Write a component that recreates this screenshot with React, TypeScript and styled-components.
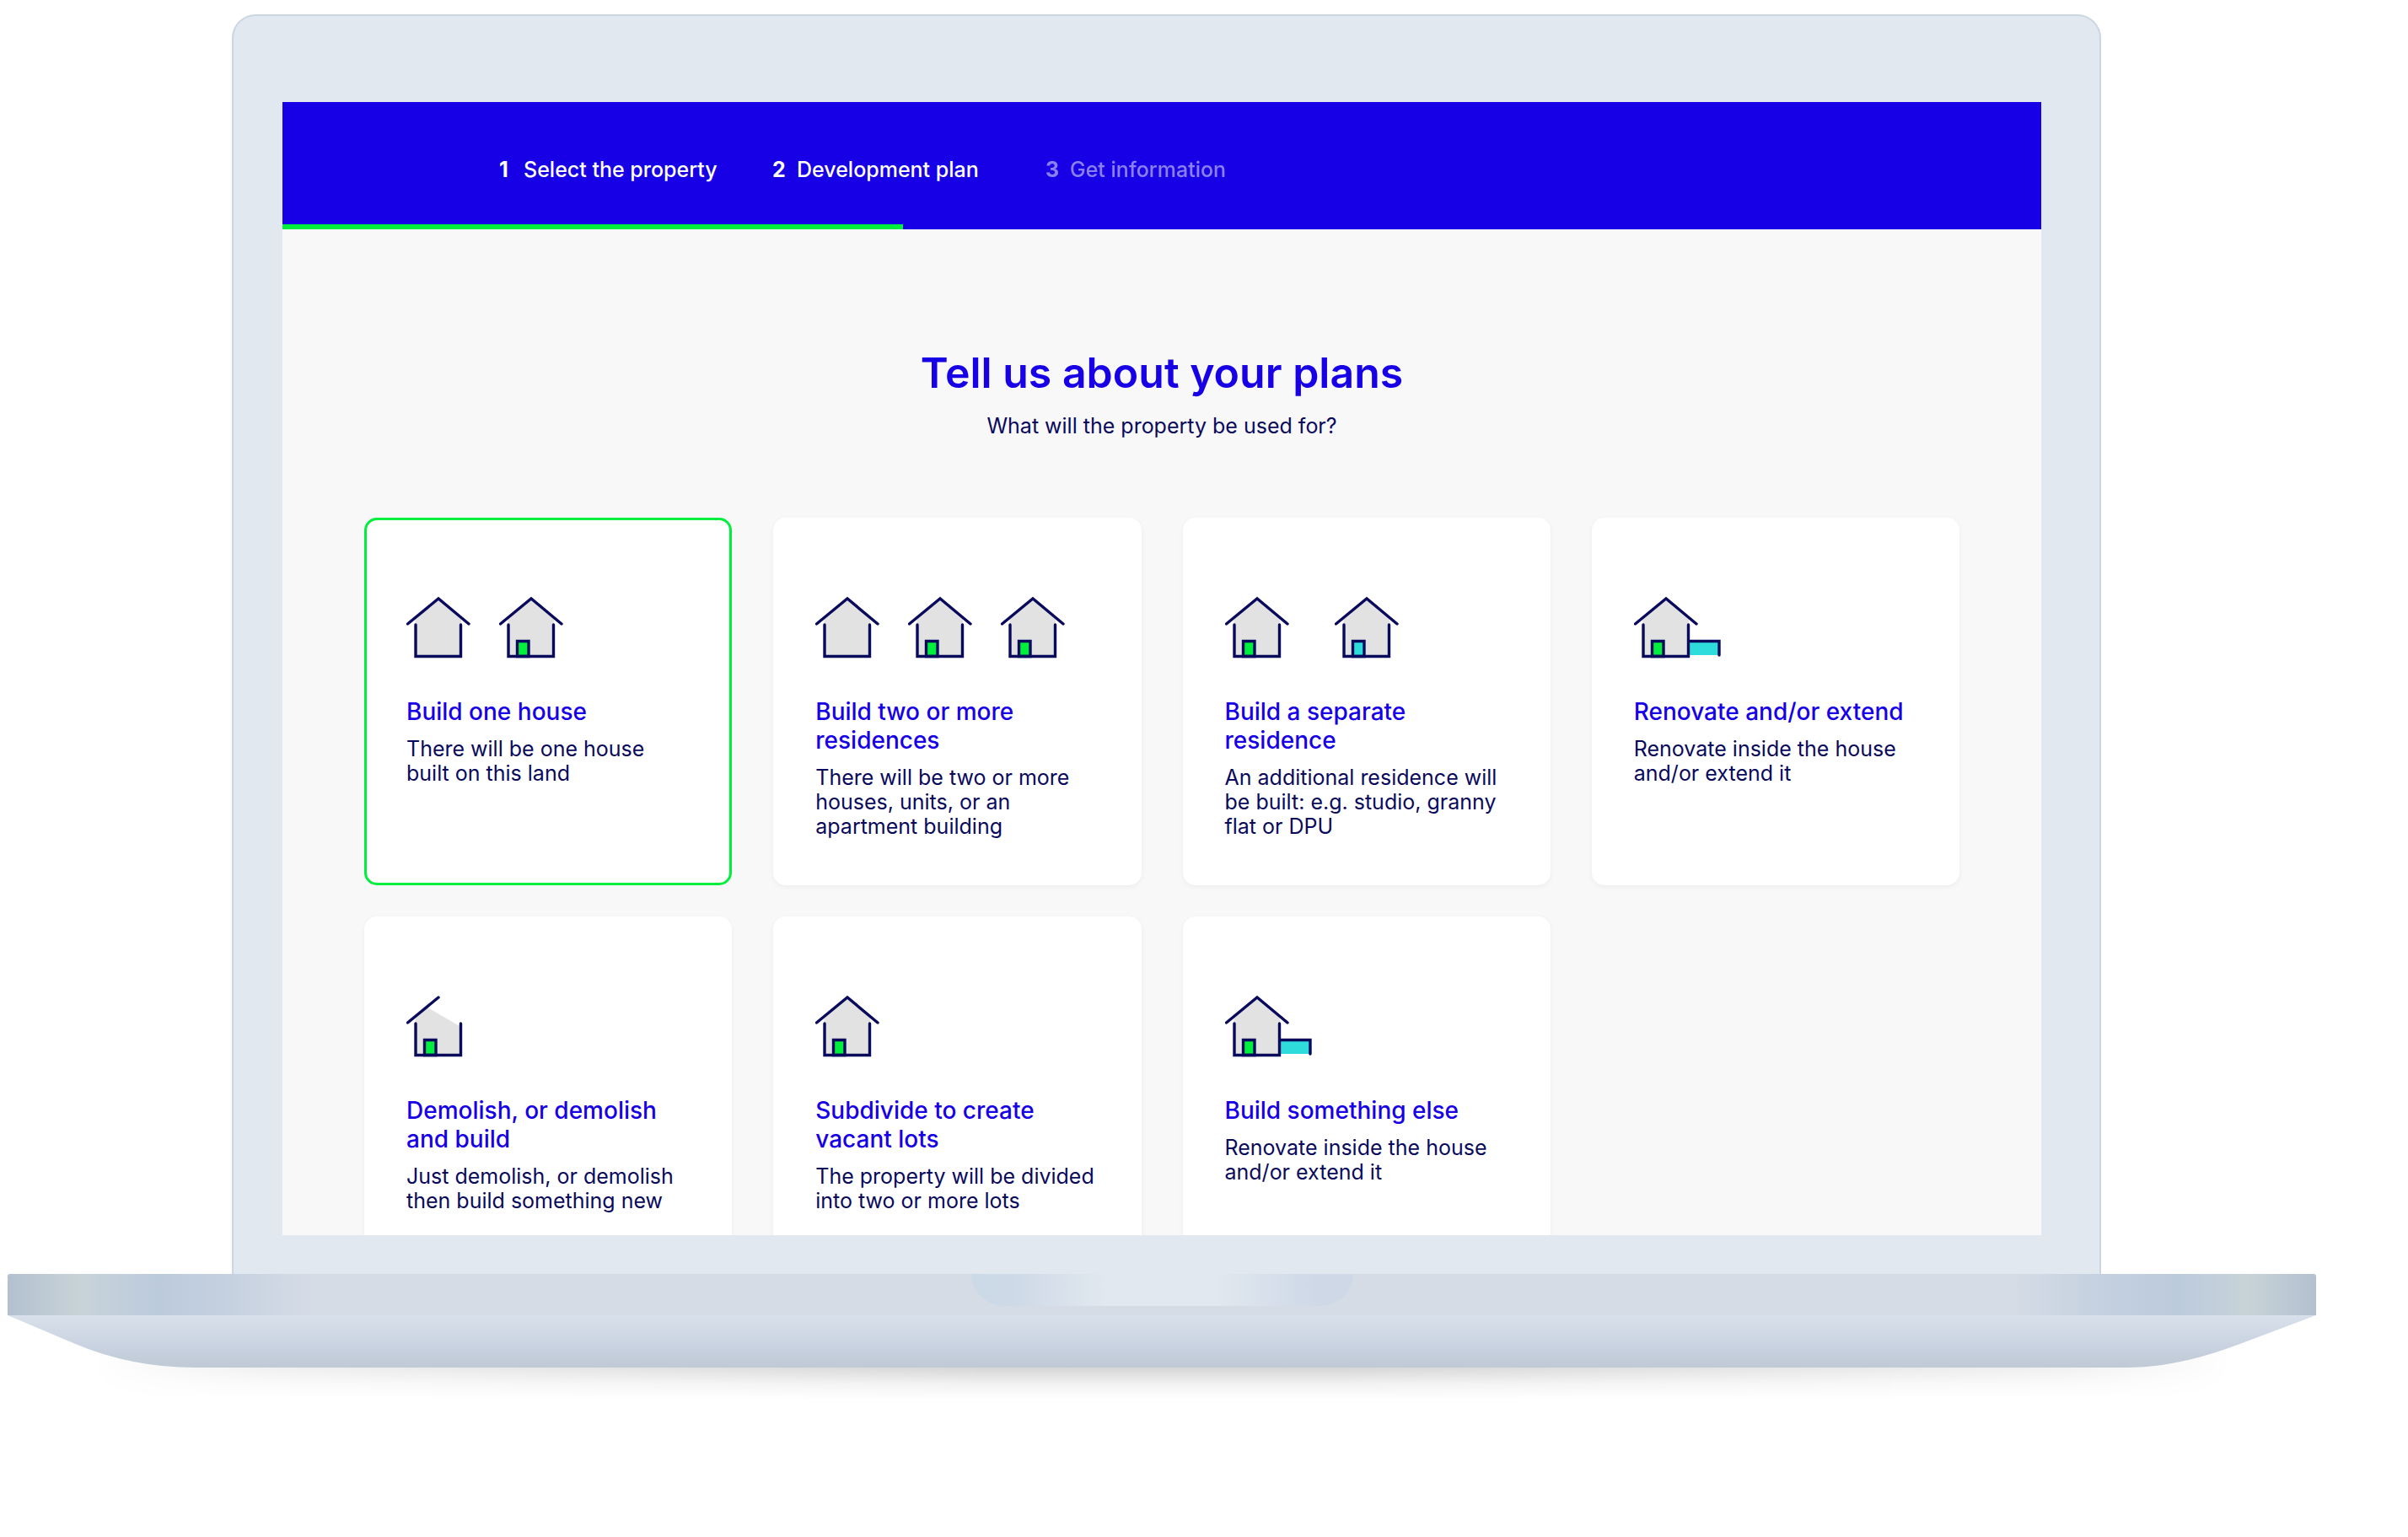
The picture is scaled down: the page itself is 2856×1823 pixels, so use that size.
import React, { useState } from 'react';
import styled, { createGlobalStyle } from 'styled-components';

const color = {
  blue: '#1700e6',
  navy: '#0a0a5c',
  green: '#00ee3c',
  cyan: '#2fdcdc',
  wall: '#e2e2e2',
  shell: '#e1e8ef',
  shellEdge: '#cbd6e0',
  page: '#f8f8f8',
};

const GlobalStyle = createGlobalStyle`
  *, *::before, *::after { box-sizing: border-box; }
  body {
    margin: 0;
    background: #fff;
    color: ${color.navy};
    font-family: Inter, "Liberation Sans", sans-serif;
  }
`;

const Laptop = styled.div`
  padding: 17px 109px 0 9px;
`;

const Lid = styled.div`
  margin: 0 255px 0 266px;
  padding: 102px 69px 46px 58px;
  border: 2px solid ${color.shellEdge};
  border-bottom: 0;
  border-radius: 28px 28px 0 0;
  background: ${color.shell};
`;

const Screen = styled.main`
  aspect-ratio: 2085 / 1343;
  overflow: hidden;
  background: ${color.page};
`;

const Header = styled.header`
  background: ${color.blue};
`;

const Steps = styled.ol`
  display: flex;
  margin: 0;
  padding: 68px 0 53px 257px;
  list-style: none;
`;

const Step = styled.li<{ $ahead?: boolean }>`
  display: flex;
  min-width: 324px;
  color: #fff;
  font-size: 25px;
  font-weight: 500;
  line-height: 24px;
  opacity: ${(p) => (p.$ahead ? 0.5 : 1)};
`;

const StepNumber = styled.span`
  flex: none;
  width: 29px;
  font-weight: 700;
`;

const Progress = styled.div<{ $percent: number }>`
  width: ${(p) => p.$percent}%;
  height: 6px;
  background: ${color.green};
`;

const Content = styled.section`
  display: flex;
  flex-direction: column;
  padding: 140px 97px 0;
`;

const Heading = styled.h1`
  margin: 0;
  color: ${color.blue};
  font-size: 50px;
  font-weight: 600;
  line-height: 60px;
  text-align: center;
`;

const Lead = styled.p`
  margin: 17px 0 92px;
  font-size: 25px;
  line-height: 33px;
  text-align: center;
`;

const Cards = styled.div`
  display: grid;
  grid-template-columns: repeat(4, 1fr);
  gap: 37px 49px;
`;

const Card = styled.button<{ $selected: boolean }>`
  display: flex;
  flex-direction: column;
  align-items: flex-start;
  justify-content: flex-start;
  min-width: 0;
  aspect-ratio: 1;
  padding: 90px 48px 0 47px;
  border: 3px solid ${(p) => (p.$selected ? color.green : 'transparent')};
  border-radius: 15px;
  background: #fff;
  box-shadow: ${(p) => (p.$selected ? 'none' : '0 2px 6px rgba(0, 0, 0, 0.05)')};
  color: inherit;
  font-family: inherit;
  text-align: left;
  cursor: pointer;
`;

const Houses = styled.span<{ $gap: number }>`
  display: flex;
  gap: ${(p) => p.$gap}px;
  margin-bottom: 44px;
`;

const HouseDrawing = styled.svg`
  display: block;
  height: 76px;
`;

const CardTitle = styled.span`
  margin-bottom: 13px;
  color: ${color.blue};
  font-size: 28px;
  font-weight: 500;
  line-height: 34px;
`;

const CardText = styled.span`
  font-size: 25px;
  line-height: 29px;
`;

const Deck = styled.div`
  display: flex;
  justify-content: center;
  align-items: flex-start;
  height: 49px;
  border-radius: 3px 3px 0 0;
  background: linear-gradient(
    90deg,
    #b3c0cf 0,
    #c8d3d8 84px,
    #bccadd 180px,
    #c4d0df 250px,
    #d5dce6 365px,
    #d5dce6 calc(100% - 365px),
    #c4d0df calc(100% - 250px),
    #bccadd calc(100% - 165px),
    #c8d3d8 calc(100% - 80px),
    #b3c0cf 100%
  );
`;

const Notch = styled.div`
  width: 453px;
  height: 38px;
  border-radius: 0 0 38px 38px;
  background: linear-gradient(90deg, #cbd9e7 0, #ced9e7 50px, ${color.shell} 160px, ${color.shell} 290px, #ced8e7 410px);
`;

const Underside = styled.svg`
  position: relative;
  z-index: 1;
  display: block;
  width: 100%;
  height: 62px;
`;

const Shadow = styled.div`
  height: 62px;
  margin: -24px 100px 0;
  background: linear-gradient(180deg, #cccccc 0, #d5d5d5 24px, #f2f2f2 44px, #fff 62px);
  mask-image: linear-gradient(90deg, transparent, rgba(0, 0, 0, 0.35) 8%, #000 42%, #000 58%, rgba(0, 0, 0, 0.35) 92%, transparent);
`;

type HouseKind = 'empty' | 'green' | 'cyan' | 'extended' | 'demolished';

function House({ kind }: { kind: HouseKind }) {
  const down = kind === 'demolished';
  const door = kind === 'empty' ? null : kind === 'cyan' ? color.cyan : color.green;
  const width = kind === 'extended' ? 104 : 76;
  return (
    <HouseDrawing
      width={width}
      height="76"
      viewBox={`0 0 ${width} 76`}
      fill="none"
      stroke={color.navy}
      strokeWidth="3.4"
      strokeLinecap="round"
      aria-hidden="true"
    >
      <path
        d={down ? 'M10.5 27L25 15L63 37V71H10.5Z' : 'M10.5 27L38 4L65 27V71H10.5Z'}
        fill={color.wall}
        stroke="none"
      />
      {kind === 'extended' && (
        <>
          <path d="M65 53.5H101V70H65Z" fill={color.cyan} stroke="none" />
          <path d="M65 53.5H101V70" />
        </>
      )}
      {door && <path d="M21.5 53.5H35V71.5H21.5Z" fill={door} />}
      <path d={down ? 'M1.5 33L38 3' : 'M1.5 33L38 3L74 33'} />
      <path d="M11 34V71.5H64.5V34" />
    </HouseDrawing>
  );
}

const steps = ['Select the property', 'Development plan', 'Get information'];

const plans: { title: string; text: string; houses: HouseKind[]; gap?: number }[] = [
  { title: 'Build one house', text: 'There will be one house built on this land', houses: ['empty', 'green'] },
  {
    title: 'Build two or more residences',
    text: 'There will be two or more houses, units, or an apartment building',
    houses: ['empty', 'green', 'green'],
  },
  {
    title: 'Build a separate residence',
    text: 'An additional residence will be built: e.g. studio, granny flat or DPU',
    houses: ['green', 'cyan'],
    gap: 54,
  },
  { title: 'Renovate and/or extend', text: 'Renovate inside the house and/or extend it', houses: ['extended'] },
  {
    title: 'Demolish, or demolish and build',
    text: 'Just demolish, or demolish then build something new',
    houses: ['demolished'],
  },
  {
    title: 'Subdivide to create vacant lots',
    text: 'The property will be divided into two or more lots',
    houses: ['green'],
  },
  { title: 'Build something else', text: 'Renovate inside the house and/or extend it', houses: ['extended'] },
];

export default function App() {
  const [selected, setSelected] = useState(0);
  return (
    <>
      <GlobalStyle />
      <Laptop>
        <Lid>
          <Screen>
            <Header>
              <Steps>
                {steps.map((label, i) => (
                  <Step key={label} $ahead={i > 1}>
                    <StepNumber>{i + 1}</StepNumber>
                    {label}
                  </Step>
                ))}
              </Steps>
              <Progress $percent={35.3} />
            </Header>
            <Content>
              <Heading>Tell us about your plans</Heading>
              <Lead>What will the property be used for?</Lead>
              <Cards>
                {plans.map((plan, i) => (
                  <Card
                    key={plan.title}
                    type="button"
                    $selected={i === selected}
                    aria-pressed={i === selected}
                    onClick={() => setSelected(i)}
                  >
                    <Houses $gap={plan.gap ?? 34}>
                      {plan.houses.map((kind, n) => (
                        <House key={n} kind={kind} />
                      ))}
                    </Houses>
                    <CardTitle>{plan.title}</CardTitle>
                    <CardText>{plan.text}</CardText>
                  </Card>
                ))}
              </Cards>
            </Content>
          </Screen>
        </Lid>
        <Deck>
          <Notch />
        </Deck>
        <Underside viewBox="0 0 2738 62" preserveAspectRatio="none" aria-hidden="true">
          <defs>
            <linearGradient id="underside" x1="0" y1="0" x2="0" y2="1">
              <stop offset="0" stopColor="#d8e0eb" />
              <stop offset="0.6" stopColor="#c9d2e0" />
              <stop offset="1" stopColor="#bfcad6" />
            </linearGradient>
          </defs>
          <path d="M0 0H2738L2645 35Q2573 62 2514 62H222Q146 62 78 33Z" fill="url(#underside)" />
        </Underside>
        <Shadow />
      </Laptop>
    </>
  );
}
